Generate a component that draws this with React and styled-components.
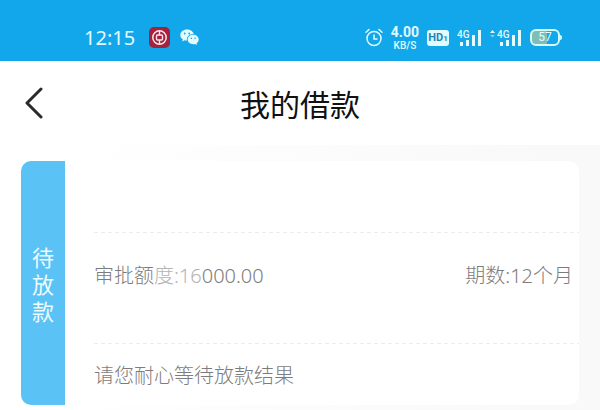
import styled, { createGlobalStyle } from 'styled-components';

const GlobalStyle = createGlobalStyle`
  * {
    box-sizing: border-box;
  }
  body {
    margin: 0;
    background-color: #fff;
    font-family: 'Noto Sans CJK SC', sans-serif;
  }
`;

const Page = styled.div`
  min-height: 100vh;
  display: flex;
  flex-direction: column;
`;

const StatusBar = styled.div`
  display: flex;
  align-items: center;
  justify-content: space-between;
  padding: 14px 38px 0 84px;
  height: 61px;
  background-color: #12a7eb;
  color: #e2fbff;
`;

const StatusGroup = styled.div`
  display: flex;
  align-items: center;
  gap: ${(props) => props.$gap}px;

  svg {
    display: block;
  }
`;

const Clock = styled.span`
  margin-right: 4px;
  font-family: 'Noto Sans', sans-serif;
  font-size: 20px;
  line-height: 24px;
`;

const NetSpeed = styled.div`
  font-family: Roboto, sans-serif;
  font-weight: 500;
  text-align: center;
`;

const SpeedValue = styled.div`
  font-size: 14px;
  font-weight: 700;
  line-height: 16px;
`;

const SpeedUnit = styled.div`
  font-size: 10px;
  line-height: 12px;
`;

const HdBadge = styled.span`
  display: flex;
  align-items: baseline;
  justify-content: center;
  width: 22px;
  height: 16px;
  border-radius: 3px;
  background-color: #e2fbff;
  color: #1b86b8;
  font-family: Roboto, sans-serif;
  font-size: 11px;
  font-weight: 700;
  line-height: 16px;

  small {
    font-size: 8px;
  }
`;

const Battery = styled.span`
  position: relative;
  display: flex;
  align-items: center;
  justify-content: center;
  width: 30px;
  height: 17px;
  margin-right: 2px;
  border: 2px solid #d8f8f4;
  border-radius: 6px;
  background: linear-gradient(to right, #7dbfb8 57%, transparent 57%);
  font-family: Roboto, sans-serif;
  font-size: 12px;
  line-height: 13px;

  &::after {
    content: '';
    position: absolute;
    right: -4px;
    top: 4px;
    width: 2px;
    height: 5px;
    border-radius: 0 2px 2px 0;
    background-color: #d8f8f4;
  }
`;

const NavBar = styled.header`
  display: grid;
  grid-template-columns: 60px 1fr 60px;
  align-items: center;
  height: 84px;
  background-color: #fff;
`;

const BackButton = styled.button`
  display: flex;
  justify-content: center;
  padding: 0 0 0 8px;
  border: none;
  background: none;
  cursor: pointer;
`;

const Title = styled.h1`
  margin: 0;
  color: #111;
  font-size: 30px;
  font-weight: 400;
  line-height: 44px;
  text-align: center;
`;

const Content = styled.main`
  flex: 1;
  padding: 16px 21px 5px;
  background: linear-gradient(to right, #fff 10%, #f9f9f9 90%);
`;

const Card = styled.section`
  display: flex;
  border-radius: 10px;
  background-color: #fff;
  overflow: hidden;
`;

const StatusLabel = styled.div`
  display: flex;
  align-items: center;
  justify-content: center;
  width: 44px;
  background-color: #5ac2f5;
  color: #eefcff;
  font-size: 22px;
  line-height: 27px;

  span {
    width: 22px;
    text-align: center;
  }
`;

const Rows = styled.div`
  flex: 1;
  padding-left: 29px;
`;

const Row = styled.div`
  display: flex;
  align-items: flex-start;
  justify-content: space-between;
  height: ${(props) => props.$height}px;
  padding: ${(props) => props.$top || 0}px 6px 0 0;
  color: #7c7c7c;
  font-family: 'Noto Sans', 'Noto Sans CJK SC', sans-serif;
  font-size: 20px;
  font-weight: 300;
  line-height: 28px;

  & + & {
    background: repeating-linear-gradient(to right, #ececec 0 4px, transparent 4px 7px) top / 100% 1px no-repeat;
  }
`;

const Soft = styled.span`
  color: #b4b4b4;
`;

const BankIcon = () => (
  <svg width="21" height="21" viewBox="0 0 21 21" fill="none">
    <rect width="21" height="21" rx="5" fill="#a3223c" />
    <circle cx="10.5" cy="10.5" r="6.7" stroke="#fbe6ec" strokeWidth="1.5" />
    <rect x="7.5" y="8" width="6" height="5" rx="1" stroke="#fbe6ec" strokeWidth="1.4" />
    <path d="M10.5 4v4M10.5 13v4" stroke="#fbe6ec" strokeWidth="1.4" />
  </svg>
);

const WechatIcon = () => (
  <svg width="19" height="17" viewBox="0 0 19 17">
    <path
      d="M7 0.5C3.2 0.5 0.3 2.9 0.3 6c0 1.8 1 3.3 2.5 4.3L2.2 12.4l2.4-1.2c.8.2 1.6.3 2.4.3C6.3 7.5 9.5 4.9 13.7 5 13.1 2.4 10.4 0.5 7 0.5Z"
      fill="#e2fbff"
    />
    <path
      d="M18.7 10.5c0-2.6-2.5-4.7-5.5-4.7s-5.5 2.1-5.5 4.7 2.5 4.7 5.5 4.7c.7 0 1.3-.1 1.9-.3l2 1.2-.5-1.9c1.3-.9 2.1-2.2 2.1-3.7Z"
      fill="#e2fbff"
    />
    <g fill="#12a7eb">
      <circle cx="4.7" cy="4.5" r="0.9" />
      <circle cx="9.2" cy="4.5" r="0.9" />
      <circle cx="11.4" cy="9.3" r="0.8" />
      <circle cx="15" cy="9.3" r="0.8" />
    </g>
  </svg>
);

const AlarmIcon = () => (
  <svg width="18" height="19" viewBox="0 0 18 19" fill="none" stroke="#e2fbff" strokeWidth="1.5" strokeLinecap="round">
    <circle cx="9" cy="10.5" r="7" />
    <path d="M9 7v4h3M1 4.3 4 1.5M17 4.3 14 1.5" />
  </svg>
);

const SignalIcon = ({ arrows }) => {
  const x = arrows ? 7 : 0;
  return (
    <svg width={25 + x} height="18" viewBox={`0 0 ${25 + x} 18`} fill="#e2fbff">
      {arrows && (
        <>
          <path d="M0 4 2.5 1 5 4Z" />
          <path d="M0 6 2.5 8.5 5 6Z" opacity="0.5" />
        </>
      )}
      <text x={x} y="9" fontFamily="Roboto, sans-serif" fontSize="10" fontWeight="500">
        4G
      </text>
      <rect x={x + 3} y="13" width="3" height="4" />
      <rect x={x + 9} y="11" width="3" height="6" />
      <rect x={x + 15} y="6" width="3" height="11" />
      <rect x={x + 21} y="1" width="3" height="16" />
    </svg>
  );
};

const App = () => {
  return (
    <Page>
      <GlobalStyle />
      <StatusBar>
        <StatusGroup $gap={10}>
          <Clock>12:15</Clock>
          <BankIcon />
          <WechatIcon />
        </StatusGroup>
        <StatusGroup $gap={8}>
          <AlarmIcon />
          <NetSpeed>
            <SpeedValue>4.00</SpeedValue>
            <SpeedUnit>KB/S</SpeedUnit>
          </NetSpeed>
          <HdBadge>
            HD<small>1</small>
          </HdBadge>
          <SignalIcon />
          <SignalIcon arrows />
          <Battery>57</Battery>
        </StatusGroup>
      </StatusBar>

      <NavBar>
        <BackButton aria-label="返回">
          <svg width="18" height="32" viewBox="0 0 18 32" fill="none">
            <path d="M16 2 2 16l14 14" stroke="#2b2b2b" strokeWidth="3" strokeLinecap="round" strokeLinejoin="round" />
          </svg>
        </BackButton>
        <Title>我的借款</Title>
      </NavBar>

      <Content>
        <Card>
          <StatusLabel>
            <span>待放款</span>
          </StatusLabel>
          <Rows>
            <Row $height={71} />
            <Row $height={111} $top={30}>
              <span>
                审批额<Soft>度:16</Soft>000.00
              </span>
              <span>期数:12个月</span>
            </Row>
            <Row $height={62} $top={19}>
              <span>请您耐心等待放款结果</span>
            </Row>
          </Rows>
        </Card>
      </Content>
    </Page>
  );
};

export default App;
